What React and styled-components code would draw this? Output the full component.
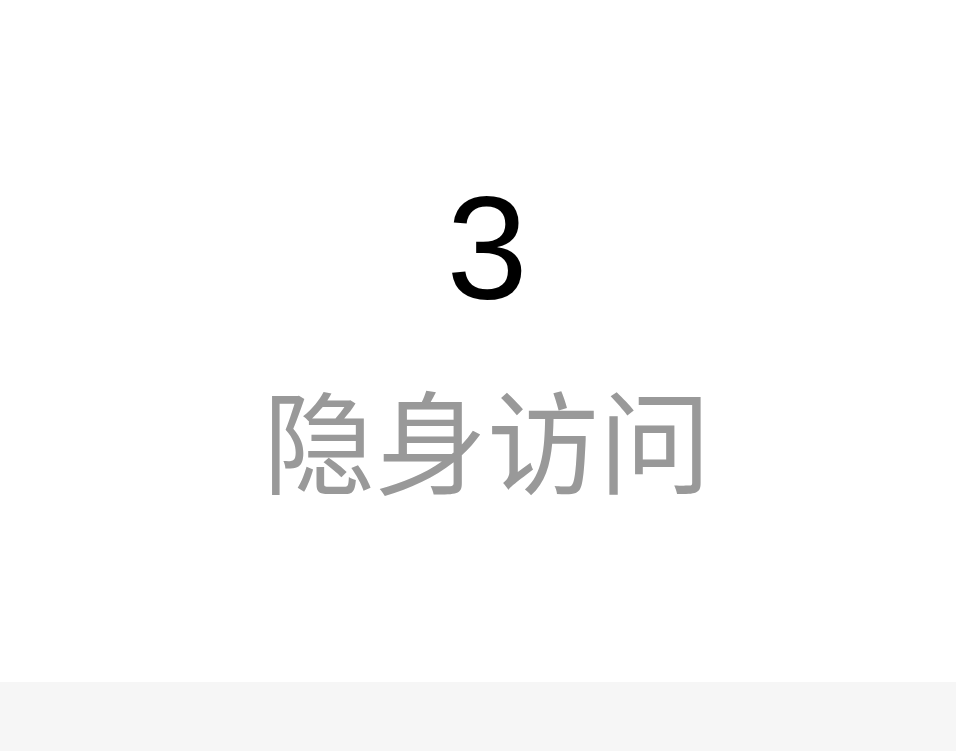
import React from "react";
import styled, { createGlobalStyle } from "styled-components";

const GlobalStyle = createGlobalStyle`
  html, body {
    margin: 0;
    padding: 0;
    background: #ffffff;
  }
  body {
    font-family: "Liberation Sans", "Noto Sans CJK SC", sans-serif;
  }
`;

const Page = styled.div`
  display: flex;
  flex-direction: column;
  width: 100%;
  height: 751px;
`;

const Card = styled.section`
  height: 682px;
  background: #ffffff;
  display: flex;
  flex-direction: column;
  align-items: center;
  padding-top: 176px;
  box-sizing: border-box;
  padding-left: 18px;
`;

const Count = styled.div`
  font-family: "Liberation Sans", Arial, sans-serif;
  font-size: 146px;
  line-height: 1;
  color: #000000;
`;

const Label = styled.div`
  margin-top: 59px;
  font-family: "Noto Sans CJK SC", "Liberation Sans", sans-serif;
  font-size: 112px;
  line-height: 1;
  color: #999999;
`;

const Footer = styled.div`
  flex: 1;
  background: #f6f6f6;
`;

export default function App() {
  return (
    <>
      <GlobalStyle />
      <Page>
        <Card>
          <Count>3</Count>
          <Label>隐身访问</Label>
        </Card>
        <Footer />
      </Page>
    </>
  );
}
